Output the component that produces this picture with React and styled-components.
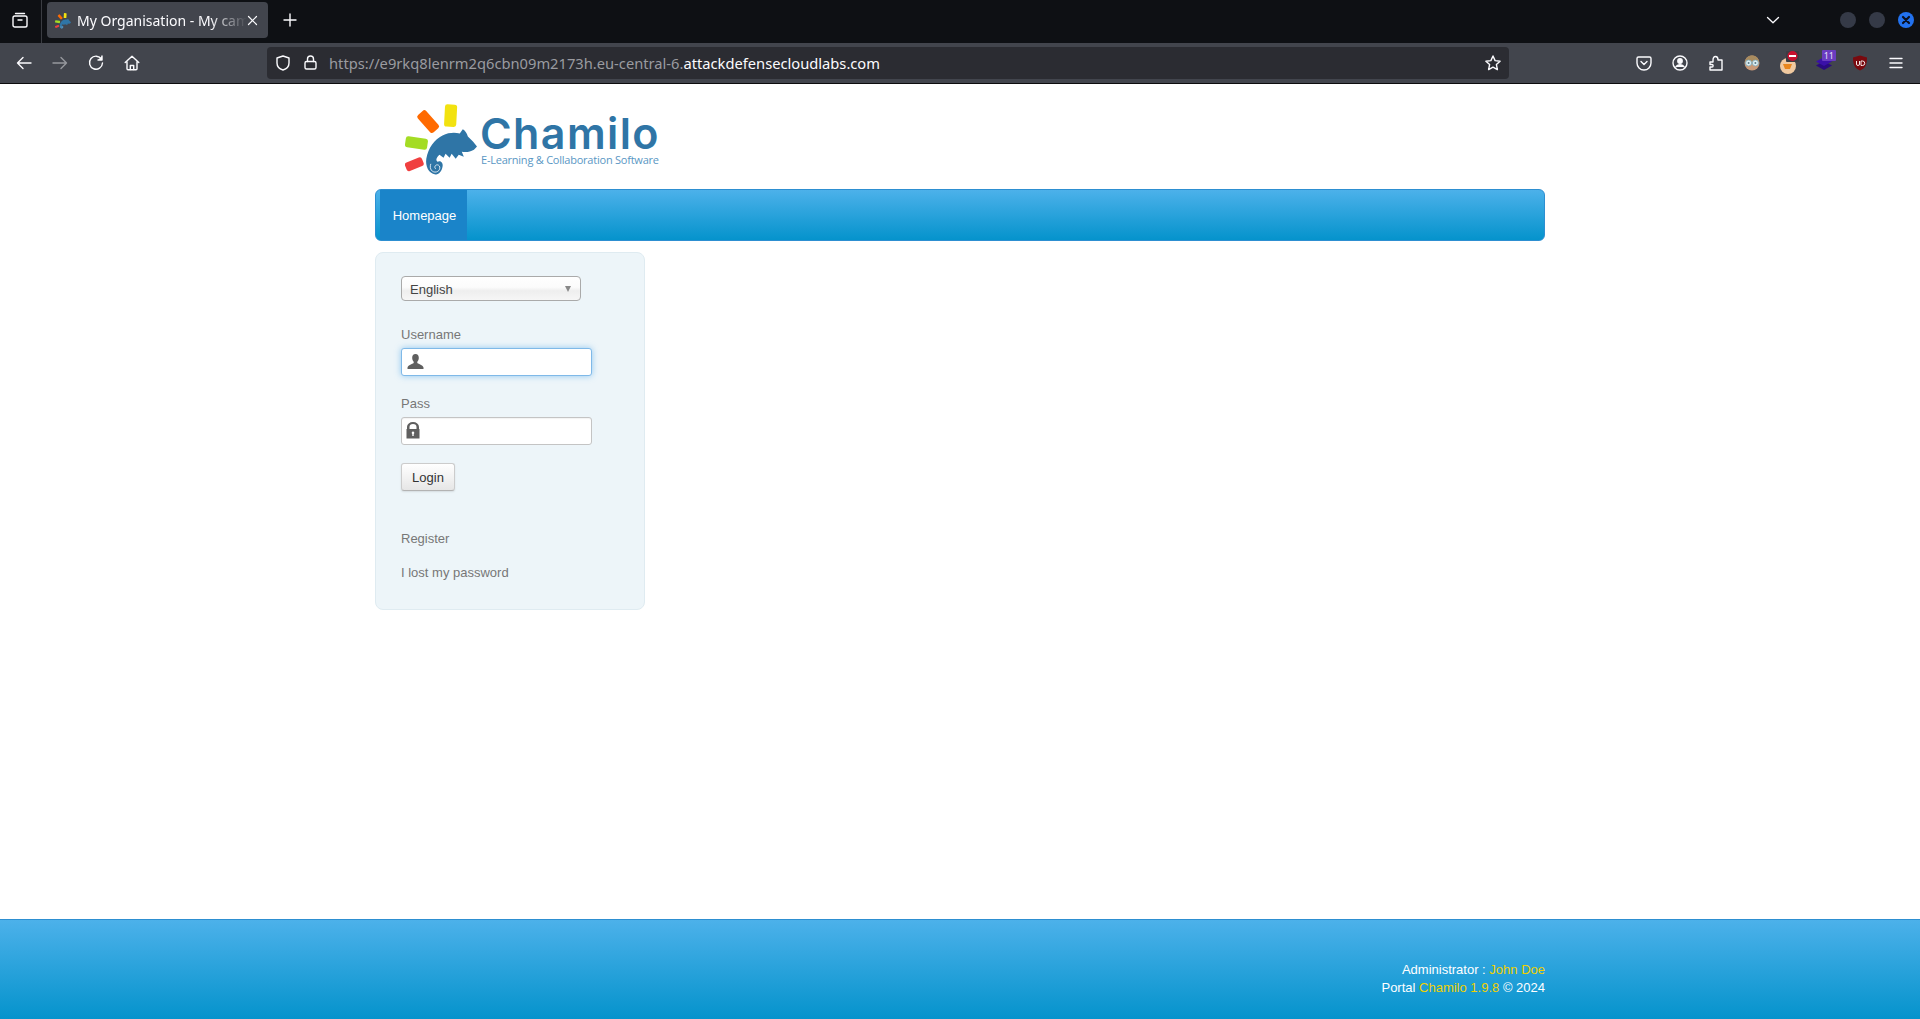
import styled, { createGlobalStyle } from "styled-components";

const GlobalStyle = createGlobalStyle`
  html, body {
    margin: 0;
    padding: 0;
    background: #fff;
  }
  * {
    box-sizing: border-box;
  }
`;

const Page = styled.div`
  display: flex;
  flex-direction: column;
  height: 1019px;
  overflow: hidden;
  font-family: "Liberation Sans", Arial, sans-serif;
  font-size: 13px;
`;

/* browser chrome */
const TabBar = styled.div`
  display: flex;
  align-items: flex-start;
  height: 43px;
  flex-shrink: 0;
  background: #0e1014;
  color: #fbfbfe;
  font-family: "Noto Sans", sans-serif;
`;

const ViewButton = styled.div`
  width: 42px;
  height: 43px;
  display: flex;
  align-items: center;
  justify-content: center;
  padding: 0 2px 3px 0;
  border-right: 1px solid #3a3c42;
`;

const Tab = styled.div`
  width: 221px;
  height: 36px;
  margin: 2px 0 0 5px;
  padding: 1px 10px 0 8px;
  display: flex;
  align-items: center;
  background: #42454d;
  border-radius: 4px;
  font-size: 14px;
`;

const TabTitle = styled.span`
  flex: 1;
  margin-left: 6px;
  overflow: hidden;
  white-space: nowrap;
  -webkit-mask-image: linear-gradient(to right, #000 78%, transparent 100%);
  mask-image: linear-gradient(to right, #000 78%, transparent 100%);
`;

const NewTab = styled.div`
  width: 44px;
  height: 40px;
  display: flex;
  align-items: center;
  justify-content: center;
`;

const TabSpacer = styled.div`
  flex: 1;
`;

const TabList = styled.div`
  width: 20px;
  height: 40px;
  margin-right: 57px;
  display: flex;
  align-items: center;
  justify-content: center;
`;

const WindowButtons = styled.div`
  display: flex;
  align-items: center;
  gap: 13px;
  height: 40px;
  margin-right: 6px;
`;

const WindowDot = styled.div`
  width: 16px;
  height: 16px;
  border-radius: 50%;
  background: ${(p) => (p.$active ? "#2272f0" : "#353a47")};
  display: flex;
  align-items: center;
  justify-content: center;
`;

const Toolbar = styled.div`
  display: flex;
  align-items: center;
  height: 41px;
  flex-shrink: 0;
  padding: 0 6px 1px 6px;
  background: #42454d;
  border-bottom: 1px solid #0c0c0e;
`;

const ToolButton = styled.div`
  width: 36px;
  height: 32px;
  flex-shrink: 0;
  display: flex;
  align-items: center;
  justify-content: center;
  position: relative;
  opacity: ${(p) => (p.$disabled ? 0.45 : 1)};
`;

const UrlBar = styled.div`
  flex: 1;
  height: 32px;
  margin: 0 117px;
  padding: 0 8px 0 8px;
  display: flex;
  align-items: center;
  background: #2b2c32;
  border-radius: 4px;
  font-family: "Noto Sans", sans-serif;
  font-size: 14.7px;
`;

const UrlIcon = styled.div`
  width: ${(p) => p.$w}px;
  flex-shrink: 0;
  display: flex;
  align-items: center;
`;

const UrlText = styled.span`
  flex: 1;
  white-space: nowrap;
  color: #9a9ba0;
`;

const UrlHost = styled.span`
  color: #fbfbfe;
`;

const Badge = styled.span`
  position: absolute;
  top: 3px;
  right: 6px;
  height: 11px;
  min-width: 14px;
  padding: 0 2px;
  background: #6a3cc0;
  border-radius: 1px;
  color: #e8e0f8;
  font-family: "Noto Sans", sans-serif;
  font-size: 9px;
  line-height: 11px;
  text-align: center;
`;

/* site */
const Main = styled.main`
  flex: 1;
  width: 1170px;
  margin-left: 375px;
`;

const Header = styled.header`
  height: 105px;
  padding: 20px 0 0 30px;
  display: flex;
  align-items: flex-start;
`;

const LogoText = styled.div`
  margin: 11px 0 0 3px;
  color: #2f75a6;
  display: flex;
  flex-direction: column;
`;

const LogoName = styled.span`
  font-family: Inter, sans-serif;
  font-size: 43px;
  font-weight: 600;
  line-height: 36px;
  letter-spacing: 1.4px;
  height: 36px;
`;

const LogoTag = styled.span`
  font-family: "Open Sans", sans-serif;
  font-size: 11px;
  line-height: 12px;
  letter-spacing: -0.23px;
  margin: 3px 0 0 1px;
  color: #5a97c4;
  white-space: nowrap;
`;

const NavBar = styled.nav`
  height: 52px;
  padding-left: 4px;
  display: flex;
  background: linear-gradient(to bottom, #4cb1ea, #0593cc);
  border: 1px solid #2d8fd1;
  border-radius: 6px;
`;

const NavItem = styled.a`
  width: 87px;
  display: flex;
  align-items: center;
  justify-content: center;
  padding: 1px 0 0 2px;
  background: #1a84c9;
  color: #fff;
  font-size: 13px;
`;

const LoginPanel = styled.section`
  width: 270px;
  height: 358px;
  margin-top: 11px;
  padding: 23px 25px 0 25px;
  background: #edf5f9;
  border: 1px solid #dfebf1;
  border-radius: 8px;
  color: #777;
`;

const SelectWrap = styled.div`
  position: relative;
  width: 180px;
  height: 25px;
  margin-bottom: 24px;

  &::after {
    content: "";
    position: absolute;
    right: 10px;
    top: 10px;
    border-left: 3.5px solid transparent;
    border-right: 3.5px solid transparent;
    border-top: 6px solid #888;
  }
`;

const LangSelect = styled.select`
  appearance: none;
  display: block;
  width: 100%;
  height: 100%;
  padding: 1px 0 0 8px;
  background: linear-gradient(to bottom, #fff 0%, #fbfbfb 45%, #eee 60%, #f6f6f6 100%);
  border: 1px solid #aaa;
  border-radius: 4px;
  color: #444;
  font-family: "Liberation Sans", Arial, sans-serif;
  font-size: 13px;
`;

const Field = styled.div`
  margin-bottom: 18px;
`;

const FieldLabel = styled.label`
  display: block;
  height: 20px;
  margin-bottom: 3px;
  line-height: 20px;
  color: #777;
`;

const InputWrap = styled.div`
  position: relative;
  width: 191px;
  height: 28px;

  svg {
    position: absolute;
    left: ${(p) => p.$iconLeft}px;
    top: 5px;
  }
`;

const TextInput = styled.input`
  display: block;
  width: 100%;
  height: 100%;
  background: #fff;
  border: 1px solid ${(p) => (p.$focused ? "#7fb9e8" : "#c4c4c4")};
  border-radius: 3px;
  box-shadow: ${(p) =>
    p.$focused ? "0 0 6px rgba(82, 168, 236, 0.6)" : "inset 0 1px 1px rgba(0, 0, 0, 0.05)"};
`;

const LoginButton = styled.button`
  display: block;
  width: 54px;
  height: 28px;
  padding: 0;
  margin-bottom: 31px;
  background: linear-gradient(to bottom, #fff, #e6e6e6);
  border: 1px solid #ccc;
  border-bottom-color: #b3b3b3;
  border-radius: 3px;
  box-shadow: 0 1px 2px rgba(0, 0, 0, 0.1);
  color: #333;
  font-family: "Liberation Sans", Arial, sans-serif;
  font-size: 13px;
`;

const PanelLink = styled.a`
  display: block;
  height: 34px;
  line-height: 34px;
  color: #777;
`;

const Footer = styled.footer`
  height: 100px;
  flex-shrink: 0;
  padding: 41px 375px 0 0;
  background: linear-gradient(to bottom, #4cb1ea, #0593cc);
  border-top: 1px solid #2d8fd1;
  color: #fff;
  font-size: 13px;
  line-height: 18px;
  text-align: right;
`;

const FooterLink = styled.a`
  color: #f0d000;
`;

const Chameleon = ({ size = 72 }) => (
  <svg width={size} height={size} viewBox="10 9 71 71" style={{ flexShrink: 0, display: "block" }}>
    <rect x="49" y="9.500" width="12" height="22" rx="2.500" fill="#f2e210" transform="rotate(3 55 20)" />
    <rect x="27" y="15" width="11" height="23" rx="2.500" fill="#ff6a00" transform="rotate(-42 32.500 26)" />
    <rect x="10.500" y="42" width="22" height="11" rx="2.500" fill="#a4dc24" transform="rotate(8 22 46)" />
    <rect x="10" y="64" width="18" height="9" rx="2.500" fill="#f04040" transform="rotate(-22 19 68)" />
    <path
      fill="#2f75a6"
      d="M40 78.500C33 77.500 30 70 31 63C33 52 39 44 47 40C53 37 59 37 64 38L67 34C69 35 71 38 72 41L77 46L81 51L78 54C74 56 71 57 66 56L68 61L63 59L60 63L56 58L54 62L50 58L48 62L44 59C41 62 40 64 42 66C45 64 48 67 47 71C46 76 43 79 40 78.500Z"
    />
    <path
      d="M35.500 68C33.500 73 37 77 41 76C45 75 45.500 69.500 42 69C39.500 68.800 38.500 72 40.500 73"
      fill="none"
      stroke="#fff"
      strokeWidth="0.8"
    />
  </svg>
);

const Stroke = ({ children, size = 16, box = 16, sw = 1.4, color = "#fbfbfe" }) => (
  <svg
    width={size}
    height={size}
    viewBox={`0 0 ${box} ${box}`}
    fill="none"
    stroke={color}
    strokeWidth={sw}
    strokeLinecap="round"
    strokeLinejoin="round"
  >
    {children}
  </svg>
);

export default function App() {
  return (
    <Page>
      <GlobalStyle />
      <TabBar>
        <ViewButton>
          <Stroke>
            <path d="M3.500 1.500h9" />
            <rect x="1" y="4" width="14" height="11" rx="1.800" />
            <path d="M6 8h4" />
          </Stroke>
        </ViewButton>
        <Tab>
          <Chameleon size={16} />
          <TabTitle>My Organisation - My campus</TabTitle>
          <Stroke size={11} box={11} sw={1.2}>
            <path d="M1.500 1.500l8 8M9.500 1.500l-8 8" />
          </Stroke>
        </Tab>
        <NewTab>
          <Stroke size={14} box={14} sw={1.4}>
            <path d="M7 1v12M1 7h12" />
          </Stroke>
        </NewTab>
        <TabSpacer />
        <TabList>
          <Stroke size={14} box={14} sw={1.3}>
            <path d="M1.500 4.500L7 9.800l5.500-5.300" />
          </Stroke>
        </TabList>
        <WindowButtons>
          <WindowDot />
          <WindowDot />
          <WindowDot $active>
            <Stroke size={10} box={10} sw={2.2} color="#0b1020">
              <path d="M2 2l6 6M8 2l-6 6" />
            </Stroke>
          </WindowDot>
        </WindowButtons>
      </TabBar>

      <Toolbar>
        <ToolButton>
          <Stroke>
            <path d="M15 8H1.500M7 2.500L1.500 8 7 13.500" />
          </Stroke>
        </ToolButton>
        <ToolButton $disabled>
          <Stroke>
            <path d="M1 8h13.500M9 2.500L14.500 8 9 13.500" />
          </Stroke>
        </ToolButton>
        <ToolButton>
          <Stroke>
            <path d="M13.500 4.200A6.500 6.500 0 1 0 14.500 8" />
            <path d="M14 1v4h-4" fill="#fbfbfe" />
          </Stroke>
        </ToolButton>
        <ToolButton>
          <Stroke>
            <path d="M1.200 7.500L8 1.300l6.800 6.200M3 6.500v7.200a1 1 0 0 0 1 1h8a1 1 0 0 0 1-1V6.500" />
            <path d="M6.300 14.500V10.500h3.400v4" />
          </Stroke>
        </ToolButton>

        <UrlBar>
          <UrlIcon $w={28}>
            <Stroke>
              <path d="M8 1L2 3v5c0 3.500 2.500 6 6 7 3.500-1 6-3.500 6-7V3z" />
            </Stroke>
          </UrlIcon>
          <UrlIcon $w={26}>
            <Stroke size={15} box={15}>
              <rect x="2" y="6.500" width="11" height="7.500" rx="1.500" />
              <path d="M4.500 6.500V4a3 3 0 0 1 6 0v2.500" />
            </Stroke>
          </UrlIcon>
          <UrlText>
            https://e9rkq8lenrm2q6cbn09m2173h.eu-central-6.<UrlHost>attackdefensecloudlabs.com</UrlHost>
          </UrlText>
          <Stroke>
            <path d="M8 1l2.100 4.600 5 .6-3.700 3.400 1 5L8 12.100l-4.400 2.500 1-5L.9 6.200l5-.6z" />
          </Stroke>
        </UrlBar>

        <ToolButton>
          <Stroke>
            <path d="M2.500 2h11A1.500 1.500 0 0 1 15 3.500V8a7 7 0 0 1-14 0V3.500A1.500 1.500 0 0 1 2.500 2z" />
            <path d="M5 6.500l3 3 3-3" />
          </Stroke>
        </ToolButton>
        <ToolButton>
          <Stroke>
            <circle cx="8" cy="8" r="7" />
            <circle cx="8" cy="6" r="2.200" fill="#fbfbfe" />
            <path d="M3.800 12c.8-1.600 2.200-2.200 4.200-2.200s3.400.6 4.200 2.200" fill="#fbfbfe" />
          </Stroke>
        </ToolButton>
        <ToolButton>
          <Stroke>
            <path d="M2 7h3V5.500C5 3 6 1.500 7.500 1.500S10 3 10 5h4v10H2v-3h2c1.500 0 1.500-2.500 0-2.500H2z" />
          </Stroke>
        </ToolButton>
        <ToolButton>
          <svg width="16" height="16" viewBox="0 0 16 16">
            <circle cx="8" cy="8" r="7.500" fill="#c99a78" />
            <path d="M1 6.500C2 2 5 .5 8 .5s6 1.500 7 6z" fill="#a88b5f" />
            <circle cx="4.600" cy="8" r="3" fill="#dceef2" stroke="#7ca8b8" strokeWidth="0.8" />
            <circle cx="11.400" cy="8" r="3" fill="#dceef2" stroke="#7ca8b8" strokeWidth="0.8" />
            <circle cx="4.600" cy="8" r="1" fill="#5a7a88" />
            <circle cx="11.400" cy="8" r="1" fill="#5a7a88" />
          </svg>
        </ToolButton>
        <ToolButton>
          <svg width="24" height="26" viewBox="0 0 24 26">
            <circle cx="12" cy="16" r="8" fill="#f0c9a0" />
            <path d="M7 14h9l-2 5H9z" fill="#e8861e" />
            <rect x="10" y="1" width="13" height="11" rx="1" fill="#3b3d44" />
            <circle cx="16.500" cy="6" r="5" fill="#c8102e" />
            <rect x="13" y="5" width="7" height="2" fill="#fff" />
          </svg>
        </ToolButton>
        <ToolButton>
          <svg width="16" height="16" viewBox="0 0 16 16">
            <path d="M8 6l8 4.500L8 15 0 10.500z" fill="#2a0a80" />
            <path d="M8 2l8 4.500L8 11 0 6.500z" fill="#3a10a8" />
          </svg>
          <Badge>11</Badge>
        </ToolButton>
        <ToolButton>
          <svg width="16" height="16" viewBox="0 0 16 16">
            <path d="M8 .5L15 2.500c0 7-1.500 10.500-7 13C2.500 13 1 9.500 1 2.500z" fill="#7a0a0f" />
            <path d="M4.500 6v3a1.500 1.500 0 0 0 3 0V6M9 6v4.500h1.500a2.200 2.200 0 0 0 0-4.500z" fill="none" stroke="#f4e8e8" strokeWidth="1" />
          </svg>
        </ToolButton>
        <ToolButton>
          <Stroke>
            <path d="M2 3.500h12M2 8h12M2 12.500h12" />
          </Stroke>
        </ToolButton>
      </Toolbar>

      <Main>
        <Header>
          <Chameleon size={72} />
          <LogoText>
            <LogoName>Chamilo</LogoName>
            <LogoTag>E-Learning &amp; Collaboration Software</LogoTag>
          </LogoText>
        </Header>

        <NavBar>
          <NavItem>Homepage</NavItem>
        </NavBar>

        <LoginPanel>
          <SelectWrap>
            <LangSelect defaultValue="English">
              <option>English</option>
            </LangSelect>
          </SelectWrap>

          <Field>
            <FieldLabel>Username</FieldLabel>
            <InputWrap $iconLeft={6}>
              <svg width="17" height="17" viewBox="0 0 17 17">
                <path
                  fill="#5f5f5f"
                  d="M8.500 1C6.300 1 5.200 2.600 5.200 4.800c0 1.600.6 3 1.500 3.900v1.300C5 11.200 1.500 11.800.5 14.500V16h16v-1.500c-1-2.700-4.500-3.300-6.200-4.500V8.700c.9-.9 1.500-2.300 1.500-3.900C11.800 2.600 10.700 1 8.500 1z"
                />
              </svg>
              <TextInput $focused />
            </InputWrap>
          </Field>

          <Field>
            <FieldLabel>Pass</FieldLabel>
            <InputWrap $iconLeft={5}>
              <svg width="14" height="17" viewBox="0 0 14 17">
                <path
                  fill="#5f5f5f"
                  fillRule="evenodd"
                  d="M1 7V5a6 5 0 0 1 12 0v2h.5v9.500H.5V7zM3.500 7h7V5a3.500 3 0 0 0-7 0zM7 9.500a1.300 1.300 0 0 0-.7 2.400V14h1.400v-2.100A1.300 1.300 0 0 0 7 9.500z"
                />
              </svg>
              <TextInput />
            </InputWrap>
          </Field>

          <LoginButton>Login</LoginButton>

          <PanelLink>Register</PanelLink>
          <PanelLink>I lost my password</PanelLink>
        </LoginPanel>
      </Main>

      <Footer>
        <div>
          Administrator : <FooterLink>John Doe</FooterLink>
        </div>
        <div>
          Portal <FooterLink>Chamilo 1.9.8</FooterLink> © 2024
        </div>
      </Footer>
    </Page>
  );
}
